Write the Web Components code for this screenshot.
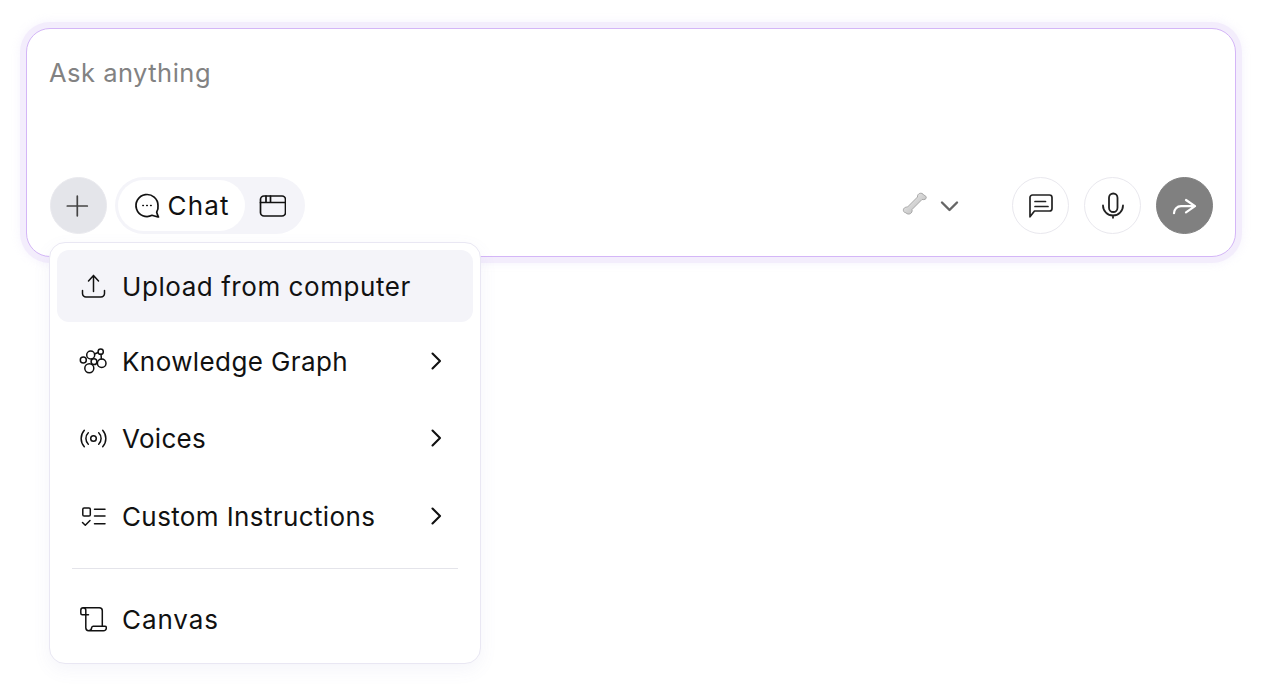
<!DOCTYPE html>
<html lang="en">
<head>
<meta charset="utf-8">
<title>Ask anything</title>
<style>
  html, body { margin: 0; background: #fff; }
  body { font-family: Inter, "Liberation Sans", sans-serif; color: #111; }
</style>
</head>
<body>
<chat-page>
  <chat-composer placeholder="Ask anything">
    <round-button slot="tools" variant="filled"><app-icon name="plus"></app-icon></round-button>
    <mode-switch slot="tools"></mode-switch>
    <model-picker slot="actions"></model-picker>
    <round-button slot="actions"><app-icon name="message"></app-icon></round-button>
    <round-button slot="actions"><app-icon name="mic"></app-icon></round-button>
    <round-button slot="actions" variant="send"><app-icon name="send"></app-icon></round-button>
  </chat-composer>

  <popup-menu slot="menu">
    <menu-row icon="upload" active style="letter-spacing:.56px">Upload from computer</menu-row>
    <menu-row icon="graph" arrow style="margin-top:3px;letter-spacing:.4px">Knowledge Graph</menu-row>
    <menu-row icon="voices" arrow style="margin-top:5px;letter-spacing:.3px">Voices</menu-row>
    <menu-row icon="checklist" arrow style="margin-top:6px;letter-spacing:.38px">Custom Instructions</menu-row>
    <menu-divider></menu-divider>
    <menu-row icon="scroll" style="letter-spacing:.9px">Canvas</menu-row>
  </popup-menu>
</chat-page>

<script>
const ICONS = {
  plus: `<path d="M13.3 4.2v19.600M3.300 14h20" stroke-width="1.7"/>`,
  bubble: `<path d="M24 13.500a11 11 0 1 0-6 9.800c2 .7 4.300 1.200 6.500 1.700-.8-1.700-1.400-3.200-1.800-4.800a11 11 0 0 0 1.300-6.700z" stroke-width="1.7"/><path d="M8.800 13.500h.6M12.700 13.500h.6M16.600 13.500h.6"/>`,
  window: `<rect x="2.500" y="4" width="25" height="20" rx="3.500" stroke-width="1.7"/><path d="M2.500 10.500h25M8 4v6.500M12.500 4v6.500" stroke-width="1.7"/>`,
  message: `<path d="M3 21.500V5.500A2.500 2.500 0 0 1 5.500 3h17A2.500 2.500 0 0 1 25 5.500v11a2.500 2.500 0 0 1-2.500 2.500H7.500L3 24.800z" stroke-width="1.7"/><path d="M8 9.500h10.500M8 14.500h13" stroke-width="1.7"/>`,
  mic: `<rect x="10" y="1.500" width="8.500" height="18.500" rx="4.250" stroke-width="1.8"/><path d="M4 13.500a10 10 0 0 0 20 0M14 23.500v2.300" stroke-width="1.8"/>`,
  send: `<path d="M15 8l9 6.200-9 6.200M24 14.200H10a7 7 0 0 0-7 7" stroke-width="2.2"/>`,
  upload: `<path d="M3.500 18.500v3a3.500 3.500 0 0 0 3.500 3.500h15a3.500 3.500 0 0 0 3.500-3.500v-3"/><path d="M14.500 19.500V3.500M9.500 9l5-5.500 5 5.500"/>`,
  graph: `<circle cx="4.300" cy="13" r="3"/><circle cx="11.700" cy="8" r="4"/><circle cx="21.700" cy="4.700" r="2.600"/><circle cx="22.700" cy="16.300" r="4.300"/><circle cx="10.300" cy="21.300" r="4.500"/><circle cx="15" cy="14.700" r="2.900"/><path d="M15.500 7l3.600-1.500M22 7.300l.4 4.700"/>`,
  voices: `<circle cx="14.500" cy="14.500" r="2.800"/><path d="M9.300 8.800a8 8 0 0 0 0 11.400M19.700 8.800a8 8 0 0 1 0 11.400M5.300 6.200a12.500 12.500 0 0 0 0 16.600M23.700 6.200a12.500 12.500 0 0 1 0 16.600"/>`,
  checklist: `<rect x="3.800" y="6" width="7.500" height="8" rx="1.300"/><path d="M3.500 20.500l2.800 2.800 4.700-4.800M15.500 7.200h10.500M15.500 14h10.500M15.500 21.800h10.500"/>`,
  scroll: `<path d="M9.500 9.800H3.300a1.700 1.700 0 0 1-1.500-1.700V5.300a2.500 2.500 0 0 1 5 0v17.500a2.900 2.900 0 0 0 5.800 0 1.700 1.700 0 0 1 1.500-1.500h11.800a1.500 1.500 0 0 1 1.500 1.500 3 3 0 0 1-3 3H9.800"/><path d="M4.300 2.800h16a3 3 0 0 1 3 3v15.500"/>`,
  chevronRight: `<path d="M10.500 6.500l7.500 7.500-7.500 7.500" stroke-width="2.1"/>`,
  chevronDown: `<path d="M7 10.500l7.500 7.500 7.500-7.500" stroke-width="2.4"/>`,
}

class AppIcon extends HTMLElement {
  connectedCallback () {
    this.attachShadow({ mode: 'open' }).innerHTML = /*html*/`
    <style>
      :host{ display: inline-flex; flex: none; width: 28px; height: 28px; }
      svg{ display: block; fill: none; stroke: currentColor; stroke-width: 1.5; stroke-linecap: round; stroke-linejoin: round; }
    </style>
    <svg width="28" height="28" viewBox="0 0 28 28" aria-hidden="true">${ICONS[this.getAttribute('name')]}</svg>
    `
  }
}
customElements.define('app-icon', AppIcon)

class ChatPage extends HTMLElement {
  connectedCallback () {
    this.attachShadow({ mode: 'open' }).innerHTML = /*html*/`
    <style>
      :host{ display: block; position: relative; height: 700px; padding: 28px 0 0 26px; box-sizing: border-box; }
      ::slotted(popup-menu){ position: absolute; left: 49px; top: 242px; }
    </style>
    <slot></slot>
    <slot name="menu"></slot>
    `
  }
}
customElements.define('chat-page', ChatPage)

class ChatComposer extends HTMLElement {
  connectedCallback () {
    this.attachShadow({ mode: 'open' }).innerHTML = /*html*/`
    <style>
      :host{
        display: flex;
        flex-direction: column;
        box-sizing: border-box;
        width: 1210px;
        height: 229px;
        padding: 22px 22px 22px;
        background: #fff;
        border: 1px solid #d4b6f7;
        border-radius: 24px;
        box-shadow: 0 0 0 6px #f3edfc, 0 0 8px 7px rgba(230, 222, 250, .3);
      }
      .prompt{ font-size: 25.5px; line-height: 44px; color: #828282; letter-spacing: .48px; }
      .bar{ display: flex; justify-content: space-between; align-items: center; margin-top: auto; }
      .group{ display: flex; align-items: center; }
      .tools{ gap: 8px; margin-left: .5px; }
    </style>
    <div class="prompt">${this.getAttribute('placeholder')}</div>
    <div class="bar">
      <div class="group tools"><slot name="tools"></slot></div>
      <div class="group actions"><slot name="actions"></slot></div>
    </div>
    `
  }
}
customElements.define('chat-composer', ChatComposer)

class RoundButton extends HTMLElement {
  connectedCallback () {
    this.attachShadow({ mode: 'open' }).innerHTML = /*html*/`
    <style>
      :host{
        display: flex;
        align-items: center;
        justify-content: center;
        box-sizing: border-box;
        width: 57px;
        height: 57px;
        margin-left: 15px;
        border-radius: 50%;
        border: 1px solid #e9e8ee;
        background: #fff;
        color: #222;
      }
      :host([variant="filled"]){ margin-left: 0; background: #e4e5ea; border-color: #e9e9ee; color: #444; }
      :host([variant="send"]){ background: #808080; border-color: #808080; color: #fff; }
    </style>
    <slot></slot>
    `
  }
}
customElements.define('round-button', RoundButton)

class ModeSwitch extends HTMLElement {
  connectedCallback () {
    this.attachShadow({ mode: 'open' }).innerHTML = /*html*/`
    <style>
      :host{
        display: flex;
        align-items: center;
        box-sizing: border-box;
        width: 190px;
        height: 57px;
        padding: 3px;
        border-radius: 29px;
        background: #f4f4f9;
      }
      .chat{
        display: flex;
        align-items: center;
        gap: 6px;
        box-sizing: border-box;
        width: 127px;
        height: 51px;
        padding-left: 16px;
        background: #fff;
        border-radius: 26px;
        font-size: 26px;
        letter-spacing: 1.2px;
      }
      .canvas{ display: flex; margin-left: 13px; color: #111; }
    </style>
    <div class="chat"><app-icon name="bubble"></app-icon><span>Chat</span></div>
    <div class="canvas"><app-icon name="window"></app-icon></div>
    `
  }
}
customElements.define('mode-switch', ModeSwitch)

class ModelPicker extends HTMLElement {
  connectedCallback () {
    this.attachShadow({ mode: 'open' }).innerHTML = /*html*/`
    <style>
      :host{ display: flex; align-items: center; margin-right: 34px; color: #666; }
      svg{ display: block; margin: -3px 7px 0 1px; }
    </style>
    <svg width="28" height="28" viewBox="0 0 28 28" aria-hidden="true">
      <defs><linearGradient id="b" x1="0" y1="0" x2="1" y2="1"><stop offset="0" stop-color="#f6f6f6"/><stop offset="1" stop-color="#b0b0b0"/></linearGradient></defs>
      <path d="M17.500 7c-.6-3.500 4.500-5.500 6.300-1.800 3.500.5 3.600 5.300-1.800 4.300L12 19.500c1 3.600-3.300 6.300-6.200 3.300-3.300-.3-3.700-5.800 1.700-5.800z" fill="url(#b)" stroke="#a0a0a0" stroke-width=".9" stroke-linejoin="round"/>
    </svg>
    <app-icon name="chevronDown"></app-icon>
    `
  }
}
customElements.define('model-picker', ModelPicker)

class PopupMenu extends HTMLElement {
  connectedCallback () {
    this.attachShadow({ mode: 'open' }).innerHTML = /*html*/`
    <style>
      :host{
        display: flex;
        flex-direction: column;
        box-sizing: border-box;
        width: 432px;
        height: 422px;
        padding: 7px;
        background: #fff;
        border: 1px solid #e9e7f3;
        border-radius: 16px;
        box-shadow: 0 6px 18px rgba(120, 120, 190, .07);
      }
    </style>
    <slot></slot>
    `
  }
}
customElements.define('popup-menu', PopupMenu)

class MenuRow extends HTMLElement {
  connectedCallback () {
    const arrow = this.hasAttribute('arrow')
      ? `<app-icon name="chevronRight"></app-icon>`
      : ''
    this.attachShadow({ mode: 'open' }).innerHTML = /*html*/`
    <style>
      :host{
        display: flex;
        align-items: center;
        gap: 15px;
        box-sizing: border-box;
        flex: none;
        height: 72px;
        padding: 0 23px 0 22px;
        border-radius: 12px;
        font-size: 26px;
        color: #111;
      }
      :host([active]){ background: #f4f4f9; }
      .label{ flex: 1; white-space: nowrap; }
    </style>
    <app-icon name="${this.getAttribute('icon')}"></app-icon>
    <span class="label"><slot></slot></span>
    ${arrow}
    `
  }
}
customElements.define('menu-row', MenuRow)

class MenuDivider extends HTMLElement {
  connectedCallback () {
    this.attachShadow({ mode: 'open' }).innerHTML = /*html*/`
    <style>
      :host{ display: block; height: 1px; margin: 16px 15px 14px; background: #e4e4ea; }
    </style>
    `
  }
}
customElements.define('menu-divider', MenuDivider)
</script>
</body>
</html>
